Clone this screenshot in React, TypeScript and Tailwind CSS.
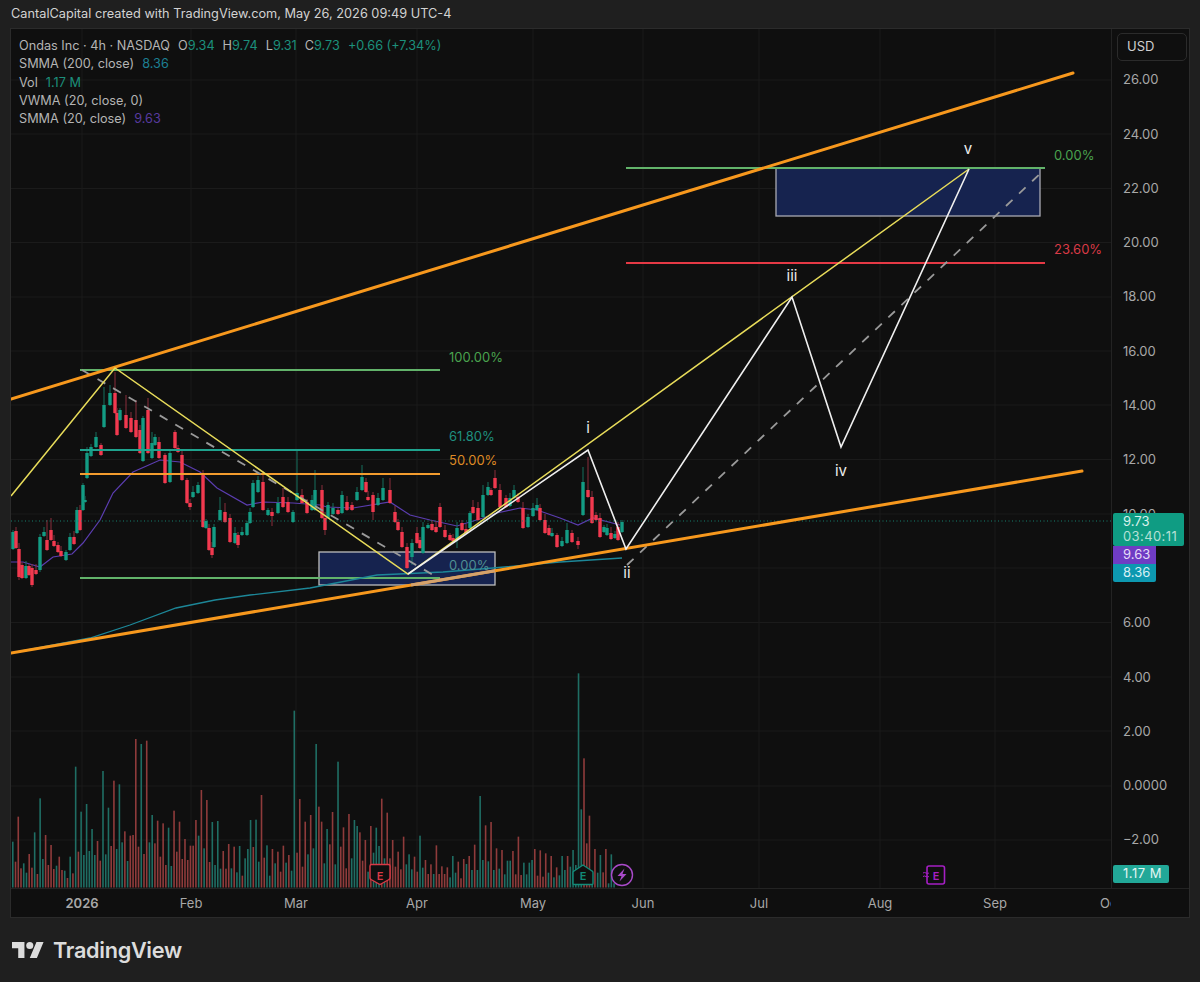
const font = "font-['Inter','Liberation_Sans',sans-serif]";

const GREEN = '#139c84';
const RED = '#f2394f';

// x, body top, body bottom, colour, optional wick top, optional wick bottom
type Candle = [number, number, number, string, number?, number?];

const candles: Candle[] = [
  [13, 532, 549, 'g'], [16, 531, 548, 'r'], [19, 549, 577, 'r', 0, 580], [22, 565, 578, 'r'], [26, 566, 578, 'g'],
  [29, 566, 575, 'r'], [32, 568, 585, 'r', 0, 587], [36, 570, 574, 'r'], [40, 537, 570, 'g', 0, 572], [44, 532, 536, 'g'],
  [47, 540, 550, 'r', 520], [51, 530, 540, 'r', 518], [54, 541, 546, 'r'], [58, 545, 552, 'r'], [61, 551, 556, 'r'],
  [66, 552, 560, 'g'], [70, 537, 550, 'g'], [74, 537, 544, 'r'], [77, 510, 533, 'g'], [80, 510, 530, 'r'],
  [83, 485, 510, 'g'], [85, 500, 502, 'g'], [87, 453, 478, 'g'], [91, 447, 456, 'g'], [96, 437, 447, 'g'],
  [101, 445, 455, 'r'], [104, 405, 427, 'g', 387], [110, 393, 405, 'g', 385], [115, 393, 413, 'r', 372], [117, 413, 435, 'r'],
  [120, 410, 420, 'g'], [126, 415, 428, 'r', 395], [131, 418, 432, 'r'], [136, 420, 437, 'r', 400], [140, 430, 453, 'r'],
  [143, 418, 461, 'g'], [148, 410, 453, 'r', 398], [152, 443, 458, 'g', 432], [155, 437, 445, 'g'], [159, 442, 458, 'r'],
  [165, 455, 483, 'r'], [170, 453, 482, 'g'], [175, 432, 448, 'r', 430], [178, 448, 452, 'r'], [182, 455, 480, 'r'],
  [187, 480, 503, 'r'], [190, 503, 507, 'r', 0, 510], [193, 492, 497, 'g'], [198, 485, 493, 'g'], [203, 475, 527, 'r'],
  [206, 521, 528, 'g'], [209, 528, 550, 'r'], [212, 548, 555, 'r', 0, 558], [214, 527, 547, 'g'], [220, 510, 520, 'g', 497],
  [225, 512, 522, 'r', 503], [230, 518, 542, 'r'], [235, 533, 543, 'g'], [238, 535, 545, 'r', 0, 548], [242, 532, 535, 'g'],
  [247, 523, 535, 'g'], [250, 512, 523, 'g'], [253, 483, 507, 'g', 480], [258, 480, 492, 'g', 476], [263, 482, 510, 'r', 471],
  [268, 510, 515, 'g'], [272, 512, 516, 'r', 0, 526], [278, 503, 513, 'g'], [283, 497, 507, 'r', 488], [288, 502, 512, 'r'],
  [293, 512, 522, 'g'], [297, 493, 500, 'g', 450], [302, 495, 503, 'r'], [307, 502, 513, 'r'], [312, 500, 510, 'g'],
  [315, 490, 510, 'g', 470], [322, 490, 518, 'r', 485], [325, 518, 530, 'r', 0, 535], [328, 505, 518, 'g'], [333, 508, 514, 'g'],
  [338, 510, 514, 'r'], [342, 495, 513, 'g'], [347, 502, 510, 'r'], [352, 505, 510, 'r'], [357, 492, 500, 'g'],
  [362, 477, 490, 'g', 465], [366, 482, 492, 'r'], [368, 497, 500, 'r'], [373, 495, 512, 'r', 0, 520], [378, 498, 505, 'g'],
  [383, 488, 500, 'g', 478], [390, 490, 503, 'r', 478], [395, 512, 522, 'r'], [398, 522, 530, 'r'], [402, 532, 547, 'r'],
  [407, 547, 568, 'r', 543], [412, 543, 557, 'g', 0, 565], [417, 533, 543, 'r'], [420, 540, 548, 'r'], [423, 527, 553, 'g'],
  [428, 525, 528, 'g'], [432, 524, 530, 'r'], [436, 527, 532, 'r'], [440, 507, 527, 'r', 503], [445, 530, 537, 'r'],
  [450, 535, 540, 'r'], [453, 538, 541, 'r'], [457, 528, 540, 'g', 0, 548], [462, 523, 530, 'r'], [466, 529, 533, 'r'],
  [470, 513, 528, 'g'], [473, 507, 513, 'r', 500], [478, 508, 520, 'r'], [483, 495, 517, 'g', 485], [488, 487, 495, 'g'],
  [491, 490, 495, 'r'], [495, 478, 488, 'r', 470], [500, 490, 507, 'r'], [506, 498, 507, 'r'], [510, 498, 506, 'g'],
  [514, 490, 498, 'g', 485], [518, 497, 502, 'r'], [523, 508, 528, 'r'], [528, 517, 527, 'g'], [533, 508, 516, 'g'],
  [537, 505, 510, 'g', 498], [540, 508, 520, 'r'], [545, 520, 533, 'r'], [549, 528, 535, 'r'], [552, 533, 536, 'g'],
  [557, 535, 547, 'r'], [562, 541, 546, 'g'], [567, 530, 543, 'g', 523], [572, 533, 542, 'r'], [578, 541, 545, 'r', 537, 549],
  [583, 482, 515, 'g', 467], [588, 490, 497, 'r', 457], [592, 497, 523, 'r'], [596, 515, 520, 'r'], [600, 518, 537, 'r'],
  [604, 527, 532, 'g'], [607, 528, 535, 'g'], [611, 533, 539, 'r'], [615, 534, 538, 'g'], [618, 527, 540, 'r'], [622, 522, 532, 'g'],
];

const volumes =
  'g515 r575 r440 r595 g580 g608 r552 r593 g487 r612 g385 g567 r495 r585 r525 r597 g587 r560 r600 g602 r624 g560 r610 g290 r545 g425 g555 g402 g543 g477 g555 r513 r572 g303 g553 g413 r528 r332 g537 g343 g517 r484 g573 r497 r495 r207 r530 g222 r552 r212 g517 g435 r520 r452 r560 r460 r585 g473 g588 r422 r545 r455 r567 r507 r570 r527 r527 r450 g497 r360 g535 r390 r576 g456 g585 g453 g596 r543 r596 r522 g595 r530 g607 g528 r617 g565 g537 g450 r531 g449 g575 r375 r563 g526 g617 r537 g580 r545 r605 r527 g578 r555 g602 g122 r548 r387 r590 r455 g553 r435 g535 g222 r410 r455 g580 g477 r523 r426 g583 g275 r530 r472 r595 r432 g565 g450 g468 r487 r572 r510 g605 r468 g548 g473 g528 r386 g565 r428 r565 r510 r590 r545 r598 r500 g583 g553 g598 r560 r605 g497 g593 r570 r612 r583 g612 r526 r612 r589 r612 r592 g622 g558 g608 r575 r625 r567 g582 r558 g600 r524 g600 g378 g570 r466 g574 r456 g600 r535 g596 r540 g613 g572 g572 r543 r613 r500 r615 g578 g613 g578 g570 r537 r617 r541 r620 r550 g608 r558 g622 r592 g616 g558 g600 r558 g590 g540 g585 g10 g418 r265 r520 r437 g610 r537 g608 g555 r607 r537 g640 g553 g640'
    .split(' ');

const smma200 =
  '11,653 90,638 130,625 176,608 215,600 250,595 310,588 377,575 443,572 493,568 560,562 622,558';
const smma20 =
  '11,562 23,562 40,567 53,557 72,554 83,543 100,520 113,493 133,472 160,460 180,462 200,472 217,488 247,505 263,502 293,503 320,505 327,507 353,508 390,502 410,515 430,520 457,526 483,518 497,513 520,508 537,510 560,518 578,525 593,518 620,525';

// the 8.00 row sits under the price badges
const priceLabels = ['26.00', '24.00', '22.00', '20.00', '18.00', '16.00', '14.00', '12.00', '10.00', '', '6.00', '4.00', '2.00', '0.0000', '\u22122.00'];
const gridY = [80, 134, 188.5, 242.5, 297, 351, 405, 459.5, 514, 568, 622.5, 677, 731, 786, 840];
const months: [string, number][] = [['2026', 82], ['Feb', 191], ['Mar', 296], ['Apr', 417], ['May', 533], ['Jun', 643], ['Jul', 759], ['Aug', 880], ['Sep', 995], ['Oct', 1112]];

const waves: [string, number, number][] = [['i', 588, 433], ['ii', 627, 578], ['iii', 792, 281], ['iv', 841, 476], ['v', 968, 154]];

function Legend() {
  const up = 'text-[#1c8f7c]';
  return (
    <div className="absolute left-[8px] top-[8px] text-[12.7px] leading-[18.3px] text-[#b4b4b4]">
      <div className="flex">
        <span>Ondas Inc · 4h · NASDAQ</span>
        <span className="ml-[8px]">O<span className={up}>9.34</span></span>
        <span className="ml-[8px]">H<span className={up}>9.74</span></span>
        <span className="ml-[8px]">L<span className={up}>9.31</span></span>
        <span className="ml-[8px]">C<span className={up}>9.73</span></span>
        <span className={`ml-[8px] ${up}`}>+0.66 (+7.34%)</span>
      </div>
      <div>SMMA (200, close)<span className="ml-[8px] text-[#1d7f93]">8.36</span></div>
      <div>Vol<span className={`ml-[8px] ${up}`}>1.17 M</span></div>
      <div>VWMA (20, close, 0)</div>
      <div>SMMA (20, close)<span className="ml-[8px] text-[#573a9e]">9.63</span></div>
    </div>
  );
}

function Plot() {
  return (
    <svg width="1100" height="859" viewBox="11 29 1100 859" className="block">
      {/* grid */}
      {gridY.map((y) => (
        <line key={y} x1="11" x2="1111" y1={y} y2={y} stroke="#1b1b1b" />
      ))}
      {months.map(([m, x]) => (
        <line key={m} x1={x} x2={x} y1="29" y2="888" stroke="#1b1b1b" />
      ))}

      {/* volume */}
      {volumes.map((v, i) => (
        <rect
          key={i}
          x={12 + i * 2.733}
          y={670 + Number(v.slice(1)) / 3}
          width="1.6"
          height={887.5 - (670 + Number(v.slice(1)) / 3)}
          fill={v[0] === 'g' ? '#1f6e64' : '#8f3b3b'}
        />
      ))}

      {/* boxes */}
      <rect x="776" y="168" width="264" height="48" fill="#16234f" stroke="#a9a9b2" strokeWidth="1.3" />
      <rect x="319" y="552" width="176" height="33" fill="#16234f" stroke="#bdbdbd" strokeWidth="1.3" />
      <line x1="80" x2="440" y1="578" y2="578" stroke="#62b36a" strokeWidth="1.8" />

      {/* smma */}
      <polyline points={smma200} fill="none" stroke="#1d8798" strokeWidth="1.3" />
      <polyline points={smma20} fill="none" stroke="#5b3db0" strokeWidth="1.2" />

      {/* candles */}
      {candles.map(([x, top, bottom, c, wt, wb], i) => {
        const col = c === 'g' ? GREEN : RED;
        const wick = c === 'g' ? '#16705f' : '#8a2f3c';
        return (
          <g key={i}>
            <line x1={x} x2={x} y1={wt || top - 2 - ((i * 7) % 5)} y2={wb || bottom + 1 + ((i * 5) % 5)} stroke={wick} strokeWidth="1" />
            <rect x={x - 1.7} y={top} width="3.4" height={bottom - top} fill={col} />
          </g>
        );
      })}

      <line x1="11" x2="1111" y1="521" y2="521" stroke="#14806f" strokeWidth="1" strokeDasharray="1 2.5" />

      {/* fib levels */}
      <line x1="80" x2="440" y1="370" y2="370" stroke="#62b36a" strokeWidth="1.8" />
      <line x1="80" x2="440" y1="450" y2="450" stroke="#1fa38e" strokeWidth="1.8" />
      <line x1="80" x2="440" y1="474" y2="474" stroke="#f39c2e" strokeWidth="1.8" />
      <line x1="626" x2="1045" y1="168" y2="168" stroke="#62b36a" strokeWidth="1.8" />
      <line x1="626" x2="1045" y1="263" y2="263" stroke="#e53945" strokeWidth="1.8" />

      {/* dashed trend */}
      <line x1="82" y1="370" x2="440" y2="579" stroke="#9a9a9a" strokeWidth="1.8" strokeDasharray="9 9" />
      <line x1="627" y1="565" x2="1044" y2="170" stroke="#9a9a9a" strokeWidth="1.8" strokeDasharray="9 9" />

      {/* channel */}
      <line x1="11" y1="399" x2="1073" y2="73" stroke="#f7981d" strokeWidth="3" strokeLinecap="round" />
      <line x1="11" y1="653" x2="1082" y2="471" stroke="#f7981d" strokeWidth="3" strokeLinecap="round" />
      {/* washed by the box fill */}
      <line x1="411" y1="585" x2="495" y2="570.7" stroke="#d4a26d" strokeWidth="3" />

      {/* waves */}
      <polyline points="11,496 115,368 408,574 969,169" fill="none" stroke="#e8dc5a" strokeWidth="1.5" />
      <polyline points="408,574 588,450 626,549 792,297 841,447 969,169" fill="none" stroke="#efefef" strokeWidth="1.6" />

      <g fontSize="13">
        <text x="449" y="362" fill="#4aa24e">100.00%</text>
        <text x="449" y="441" fill="#1f8f7f">61.80%</text>
        <text x="449" y="465" fill="#de8a25">50.00%</text>
        <text x="449" y="570" fill="#4f8f93">0.00%</text>
        <text x="1054" y="160" fill="#4aa24e">0.00%</text>
        <text x="1054" y="254" fill="#d93a46">23.60%</text>
      </g>
      <g fontSize="15" fill="#ececec" textAnchor="middle">
        {waves.map(([t, x, y]) => (
          <text key={t} x={x} y={y}>{t}</text>
        ))}
      </g>

      {/* earnings + dividends markers */}
      <path d="M370 866 q0 -1.5 1.5 -1.5 h17 q1.5 0 1.5 1.5 v12 q0 1 -1 1.5 l-9 5 l-9 -5 q-1 -.5 -1 -1.5 z" fill="#0f0f0f" stroke="#d93a46" strokeWidth="1.4" />
      <text x="380" y="880" fontSize="11" fontWeight="600" fill="#d93a46" textAnchor="middle">E</text>
      <path d="M574 871 l9 -6 l9 6 q1 .5 1 1.5 v11 q0 1 -1 1 h-18 q-1 0 -1 -1 v-11 q0 -1 1 -1.5 z" fill="#0f0f0f" stroke="#128a78" strokeWidth="1.4" />
      <text x="583" y="880" fontSize="11" fontWeight="600" fill="#128a78" textAnchor="middle">E</text>
      <circle cx="622" cy="875" r="10.5" fill="#0f0f0f" stroke="#a94ac9" strokeWidth="1.4" />
      <path d="M624.5 868.5 l-7 7.5 h4 l-2 5.5 l7 -7.5 h-4 z" fill="#a94ac9" />
      <rect x="927" y="866" width="17.5" height="18" rx="2" fill="#0f0f0f" stroke="#a51fc4" strokeWidth="1.6" />
      <path d="M923 873 q1.5 -1 3 0 t3 0 M923 876.5 q1.5 -1 3 0 t3 0" fill="none" stroke="#a51fc4" strokeWidth="1" />
      <text x="936" y="880" fontSize="11" fontWeight="600" fill="#a51fc4" textAnchor="middle">E</text>
    </svg>
  );
}

export default function App() {
  return (
    <div className={`${font} w-[1200px] h-[982px] bg-[#1f1f1f] overflow-hidden`}>
      <div className="h-[28px] pl-[11px] flex items-center text-[12.75px] text-[#d2d2d2]">
        CantalCapital created with TradingView.com, May 26, 2026 09:49 UTC-4
      </div>

      <div className="ml-[10px] w-[1180px] h-[890px] border border-[#2b2b2b] bg-[#0f0f0f] flex flex-col">
        <div className="flex h-[859px]">
          <div className="relative w-[1100px]">
            <Plot />
            <Legend />
          </div>
          <div className="relative flex-1 border-l border-[#232323] pt-[23.85px] text-[13px] text-[#a8a8a8]">
            {priceLabels.map((p, i) => (
              <div key={i} className="h-[54.3px] pl-[11px] flex items-center">{p}</div>
            ))}
            <div className="absolute left-[5px] top-[4px] w-[70px] h-[28px] rounded-[5px] border border-[#2b2b2b] bg-[#0f0f0f] pl-[9px] flex items-center text-[13px] text-[#d0d0d0]">
              USD
            </div>
            <div className="absolute left-[1px] top-[483.5px] w-[71px] h-[33px] rounded-[2px] bg-[#0f9c83] pl-[10px] flex flex-col justify-center text-[13px] leading-[15.5px] text-[#d9f2ec]">
              <span>9.73</span>
              <span className="tracking-[0.4px] text-[#b5e0d6]">03:40:11</span>
            </div>
            <div className="absolute left-[1px] top-[517px] w-[43px] h-[17.5px] bg-[#6f3cc4] pl-[10px] flex items-center text-[13px] text-[#e6dcf7]">9.63</div>
            <div className="absolute left-[1px] top-[535px] w-[43px] h-[18px] rounded-b-[2px] bg-[#0d98b0] pl-[10px] flex items-center text-[13px] text-[#d7f0f5]">8.36</div>
            <div className="absolute left-[1px] top-[836px] w-[56px] h-[18px] rounded-[2px] bg-[#22a898] pl-[10px] flex items-center text-[13px] tracking-[0.5px] text-[#e3f5f2]">1.17 M</div>
          </div>
        </div>
        <div className="flex-1 border-t border-[#232323] overflow-hidden">
          <svg width="1100" height="28" viewBox="11 889 1100 28" className="block">
            {months.map(([m, x]) => (
              <text key={m} x={m === 'Oct' ? x - 12 : x} y="908" fontSize="13" fill="#a8a8a8" textAnchor={m === 'Oct' ? 'start' : 'middle'} fontWeight={m === '2026' ? 600 : 400}>
                {m}
              </text>
            ))}
          </svg>
        </div>
      </div>

      <div className="flex items-center pl-[12px] pt-[21px] gap-[9px]">
        <svg width="32" height="18" viewBox="0 4 36 18" fill="#dcdcdc">
          <path d="M14 22H7V11H0V4h14v18zM28 22h-8l7.5-18h8L28 22z" />
          <circle cx="20" cy="8" r="4" />
        </svg>
        <span className="text-[21.7px] leading-[22px] font-semibold tracking-[-0.3px] text-[#dcdcdc]">TradingView</span>
      </div>
    </div>
  );
}
